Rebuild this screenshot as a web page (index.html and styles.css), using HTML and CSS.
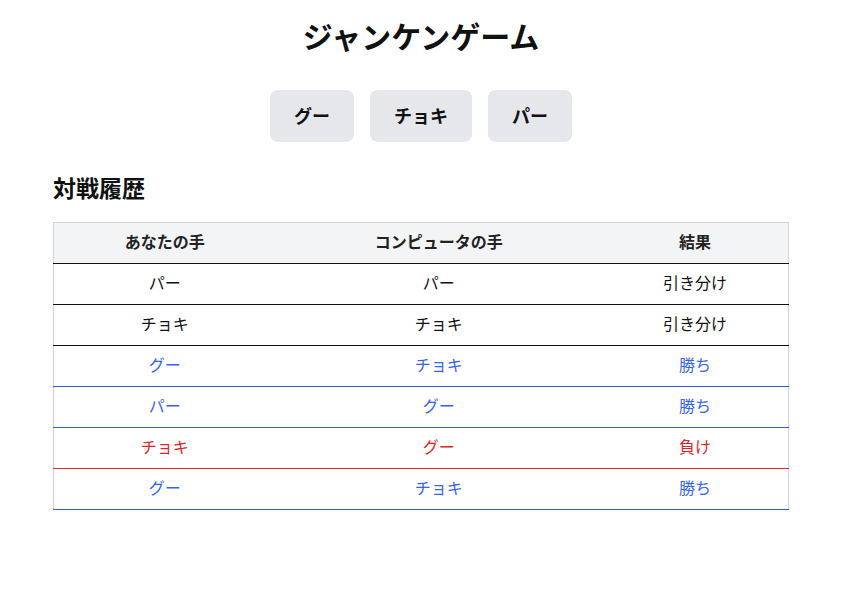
FILE: index.html
```html
<!DOCTYPE html>
<html lang="ja">
<head>
  <meta charset="UTF-8">
  <meta name="viewport" content="width=device-width, initial-scale=1.0">
  <title>ジャンケンゲーム</title>
  <link rel="stylesheet" href="styles.css">
</head>
<body>
  <div class="container">
    <h1>ジャンケンゲーム</h1>
    <div class="hands">
      <button class="hand-button">グー</button>
      <button class="hand-button">チョキ</button>
      <button class="hand-button">パー</button>
    </div>
    <h2>対戦履歴</h2>
    <table class="history">
      <thead>
        <tr>
          <th>あなたの手</th>
          <th>コンピュータの手</th>
          <th>結果</th>
        </tr>
      </thead>
      <tbody>
        <tr class="draw"><td>パー</td><td>パー</td><td>引き分け</td></tr>
        <tr class="draw"><td>チョキ</td><td>チョキ</td><td>引き分け</td></tr>
        <tr class="win"><td>グー</td><td>チョキ</td><td>勝ち</td></tr>
        <tr class="win"><td>パー</td><td>グー</td><td>勝ち</td></tr>
        <tr class="lose"><td>チョキ</td><td>グー</td><td>負け</td></tr>
        <tr class="win"><td>グー</td><td>チョキ</td><td>勝ち</td></tr>
      </tbody>
    </table>
  </div>
</body>
</html>
```

FILE: styles.css
```css
body {
  font-family: "Noto Sans CJK JP", "Noto Sans", sans-serif;
  margin: 0;
  padding: 0 14px 0 0;
  background-color: #fff;
  color: #111;
}

.container {
  margin: 0 53px;
}

h1 {
  font-size: 30px;
  font-weight: bold;
  text-align: center;
  margin: 0;
  padding-top: 12px;
  line-height: 46px;
}

.hands {
  display: flex;
  justify-content: center;
  gap: 16px;
  margin-top: 32px;
}

.hand-button {
  font-family: inherit;
  font-size: 18px;
  font-weight: bold;
  color: #111;
  line-height: 28px;
  padding: 11px 24px 13px;
  background-color: #e5e7eb;
  border: none;
  border-radius: 8px;
  cursor: pointer;
}

h2 {
  font-size: 23px;
  font-weight: bold;
  margin: 28px 0 0;
  line-height: 34px;
}

.history {
  width: 100%;
  margin-top: 18px;
  border-collapse: collapse;
  border: 1px solid #d1d5db;
  font-size: 16px;
}

.history th {
  background-color: #f3f4f6;
  font-weight: bold;
  color: #222;
  padding: 7px 10px 11px;
  line-height: 22px;
  border-bottom: 1px solid #111;
}

.history td {
  text-align: center;
  padding: 7px 10px 11px;
  line-height: 22px;
}

.history tr.draw td {
  color: #111;
  border-bottom: 1px solid #111;
}

.history tr.win td {
  color: #3464ee;
  border-bottom: 1px solid #2b5ee8;
}

.history tr.lose td {
  color: #dc2626;
  border-bottom: 1px solid #dc2626;
}
```
